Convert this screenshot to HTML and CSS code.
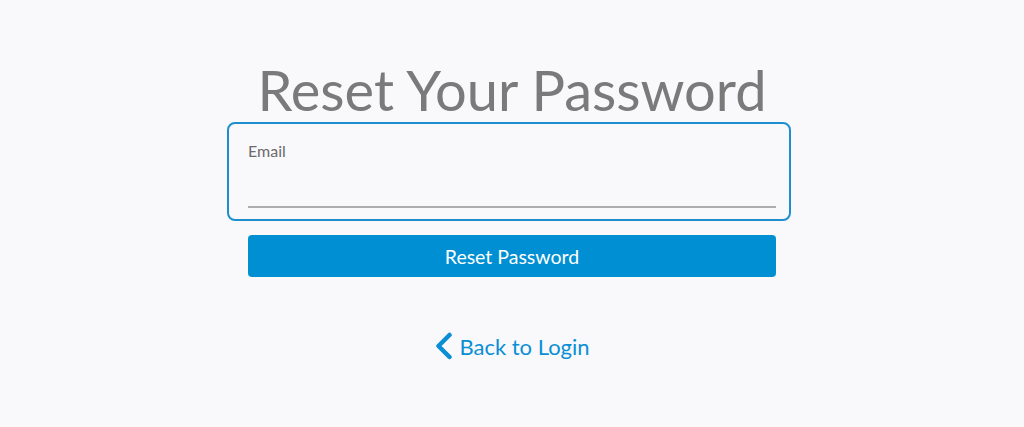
FILE: index.html
```html
<!DOCTYPE html>
<html lang="en">
<head>
<meta charset="utf-8">
<title>Reset Your Password</title>
<link rel="stylesheet" href="styles.css">
</head>
<body>
<main class="page">
  <h1 class="title">Reset Your Password</h1>
  <form class="form">
    <div class="field">
      <label class="field-label" for="email">Email</label>
      <input class="field-input" id="email" type="email">
    </div>
    <button class="submit" type="button">Reset Password</button>
  </form>
  <a class="back" href="#">
    <svg class="back-icon" width="19" height="28" viewBox="0 0 19 28" aria-hidden="true">
      <path d="M15.5 3 L4.5 14 L15.5 25" fill="none" stroke="#0a8fd5" stroke-width="4.5" stroke-linecap="round" stroke-linejoin="round"/>
    </svg>
    <span>Back to Login</span>
  </a>
</main>
</body>
</html>
```

FILE: styles.css
```css
html, body {
  margin: 0;
  padding: 0;
  background: #f9f8fb;
}
body {
  font-family: "Lato", "Noto Sans", sans-serif;
  height: 427px;
}
.page {
  display: flex;
  flex-direction: column;
  align-items: center;
  padding-top: 58px;
}
.title {
  margin: 0;
  font-weight: 400;
  font-size: 56px;
  line-height: 64px;
  color: #7a7a7a;
}
.form {
  display: flex;
  flex-direction: column;
  align-items: center;
}
.field {
  box-sizing: border-box;
  width: 564px;
  height: 99px;
  margin-right: 6px;
  border: 2.5px solid #1d8fcf;
  border-radius: 8px;
  padding: 18px 13px 0 19px;
  display: flex;
  flex-direction: column;
}
.field-label {
  font-size: 16px;
  color: #6b6b6b;
  line-height: 18px;
}
.field-input {
  margin-top: 24px;
  border: 0;
  border-bottom: 2px solid #adadad;
  background: transparent;
  height: 22px;
  outline: none;
  padding: 0;
}
.submit {
  margin-top: 14px;
  width: 528px;
  height: 42px;
  border: 0;
  border-radius: 4px;
  background: #008fd3;
  color: #ffffff;
  font-family: inherit;
  font-size: 19.5px;
}
.back {
  margin-top: 55px;
  display: flex;
  align-items: center;
  gap: 6px;
  color: #0a8fd5;
  text-decoration: none;
  font-size: 22px;
}
.back-icon {
  display: block;
}
```
